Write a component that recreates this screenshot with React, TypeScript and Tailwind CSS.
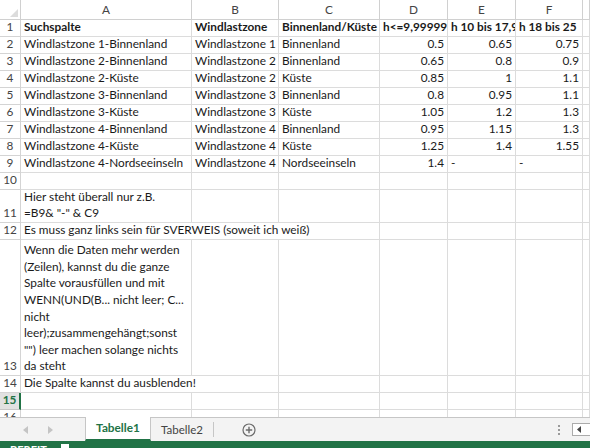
type Cell = { t?: string; w: string; right?: boolean; bold?: boolean; lines?: string[] }
type Row = { n: string; h: string; cells: Cell[]; active?: boolean }

const FONT = { fontFamily: 'Lato, "Open Sans", sans-serif' }

// column widths (incl. right gridline)
const HW = 'w-[21px]'
const A = 'w-[171px]', B = 'w-[87px]', C = 'w-[101px]', D = 'w-[68px]', E = 'w-[68px]', F = 'w-[67px]', G = 'w-[7px]'

const plain = (a = '', b = '', c = '', d = '', e = '', f = '', dr = true, er = true, fr = true): Cell[] => [
  { t: a, w: A }, { t: b, w: B }, { t: c, w: C },
  { t: d, w: D, right: dr }, { t: e, w: E, right: er }, { t: f, w: F, right: fr }, { w: G },
]

const rows: Row[] = [
  {
    n: '1', h: 'h-[17px]', cells: [
      { t: 'Suchspalte', w: A, bold: true }, { t: 'Windlastzone', w: B, bold: true }, { t: 'Binnenland/Küste', w: C, bold: true },
      { t: 'h<=9,999999999', w: D, bold: true }, { t: 'h 10 bis 17,999', w: E, bold: true }, { t: 'h 18 bis 25', w: F, bold: true }, { w: G },
    ],
  },
  { n: '2', h: 'h-[17px]', cells: plain('Windlastzone 1-Binnenland', 'Windlastzone 1', 'Binnenland', '0.5', '0.65', '0.75') },
  { n: '3', h: 'h-[17px]', cells: plain('Windlastzone 2-Binnenland', 'Windlastzone 2', 'Binnenland', '0.65', '0.8', '0.9') },
  { n: '4', h: 'h-[17px]', cells: plain('Windlastzone 2-Küste', 'Windlastzone 2', 'Küste', '0.85', '1', '1.1') },
  { n: '5', h: 'h-[17px]', cells: plain('Windlastzone 3-Binnenland', 'Windlastzone 3', 'Binnenland', '0.8', '0.95', '1.1') },
  { n: '6', h: 'h-[17px]', cells: plain('Windlastzone 3-Küste', 'Windlastzone 3', 'Küste', '1.05', '1.2', '1.3') },
  { n: '7', h: 'h-[17px]', cells: plain('Windlastzone 4-Binnenland', 'Windlastzone 4', 'Binnenland', '0.95', '1.15', '1.3') },
  { n: '8', h: 'h-[17px]', cells: plain('Windlastzone 4-Küste', 'Windlastzone 4', 'Küste', '1.25', '1.4', '1.55') },
  { n: '9', h: 'h-[17px]', cells: plain('Windlastzone 4-Nordseeinseln', 'Windlastzone 4', 'Nordseeinseln', '1.4', '-', '-', true, false, false) },
  { n: '10', h: 'h-[17px]', cells: plain() },
  {
    n: '11', h: 'h-[33px]', cells: [
      { w: A, lines: ['Hier steht überall nur z.B.', '=B9& "-" & C9'] }, { w: B }, { w: C }, { w: D }, { w: E }, { w: F }, { w: G },
    ],
  },
  {
    n: '12', h: 'h-[17px]', cells: [
      { t: 'Es muss ganz links sein für SVERWEIS (soweit ich weiß)', w: 'w-[359px]' }, { w: D }, { w: E }, { w: F }, { w: G },
    ],
  },
  {
    n: '13', h: 'h-[136px]', cells: [
      {
        w: A, lines: [
          'Wenn die Daten mehr werden', '(Zeilen), kannst du die ganze', 'Spalte vorausfüllen und mit',
          'WENN(UND(B... nicht leer; C...', 'nicht', 'leer);zusammengehängt;sonst', '"") leer machen solange nichts', 'da steht',
        ],
      },
      { w: B }, { w: C }, { w: D }, { w: E }, { w: F }, { w: G },
    ],
  },
  {
    n: '14', h: 'h-[17px]', cells: [
      { t: 'Die Spalte kannst du ausblenden!', w: 'w-[258px]' }, { w: C }, { w: D }, { w: E }, { w: F }, { w: G },
    ],
  },
  { n: '15', h: 'h-[17px]', cells: plain(), active: true },
  { n: '16', h: 'h-[17px]', cells: plain() },
]

function GridCell({ c }: { c: Cell }) {
  return (
    <div className={`${c.w} shrink-0 h-full border-r border-b border-[#dcdcdc] px-[3px] flex flex-col justify-end overflow-hidden whitespace-nowrap text-[#1a1a1a] ${c.lines ? '' : 'pb-[1px]'} ${c.right ? 'items-end' : 'items-start'} ${c.bold ? 'font-bold' : ''}`}>
      {c.lines ? c.lines.map((l, i) => <div key={i} className="leading-[16.6px]">{l}</div>) : <div className="leading-[16px]">{c.t}</div>}
    </div>
  )
}

function SheetRow({ r }: { r: Row }) {
  return (
    <div className={`flex ${r.h}`}>
      <div className={`${HW} shrink-0 h-full flex items-end justify-center pb-[1px] leading-[16px] border-b ${r.active
        ? 'bg-[#e1e1e1] text-[#217346] font-bold border-r-2 border-r-[#217346] border-b-[#c6c6c6]'
        : 'bg-white text-[#444] border-r border-[#d4d4d4]'}`}>
        {r.n}
      </div>
      {r.cells.map((c, i) => <GridCell key={i} c={c} />)}
    </div>
  )
}

export default function App() {
  const heads: [string, string][] = [['A', A], ['B', B], ['C', C], ['D', D], ['E', E], ['F', F], ['', G]]
  return (
    <div className="w-[590px] h-[448px] overflow-hidden bg-white flex flex-col text-[11.8px]" style={FONT}>
      <div className="flex-1 overflow-hidden">
        {/* column headers */}
        <div className="flex h-[20px]">
          <div className={`${HW} shrink-0 h-full border-r border-b border-[#d0d0d0] relative`}>
            <svg width="8" height="8" className="absolute right-[2px] bottom-[2px]"><polygon points="8,0 8,8 0,8" fill="#dcdcdc" /></svg>
          </div>
          {heads.map(([l, w], i) => (
            <div key={i} className={`${w} shrink-0 h-full border-r border-b border-[#d0d0d0] flex items-center justify-center text-[#444] pt-[1px]`}>{l}</div>
          ))}
        </div>
        {rows.map(r => <SheetRow key={r.n} r={r} />)}
      </div>

      {/* sheet tabs */}
      <div className="h-[24px] shrink-0 bg-[#f3f3f3] border-t border-[#c6c6c6] flex items-stretch">
        <div className="w-[85px] flex items-center gap-[20px] pl-[23px]">
          <svg width="5" height="8"><polygon points="5,0 5,8 0,4" fill="#c4c4c4" /></svg>
          <svg width="5" height="8"><polygon points="0,0 0,8 5,4" fill="#c4c4c4" /></svg>
        </div>
        <div className="w-[66px] -mt-px bg-white border-x border-[#c6c6c6] border-b-2 border-b-[#217346] flex items-center justify-center font-bold text-[#217346] text-[11.8px]">Tabelle1</div>
        <div className="w-[62px] flex items-center justify-center text-[#444] text-[11.5px]">Tabelle2</div>
        <div className="w-px my-[4px] bg-[#c6c6c6]" />
        <div className="w-[69px] flex items-center justify-center">
          <svg width="14" height="14" viewBox="0 0 14 14">
            <circle cx="7" cy="7" r="6" fill="none" stroke="#6b6b6b" strokeWidth="1.2" />
            <path d="M7 3.8v6.4M3.8 7h6.4" stroke="#6b6b6b" strokeWidth="1.4" />
          </svg>
        </div>
        <div className="flex-1" />
        <div className="flex flex-col justify-center gap-[2px] mr-[12px]">
          <span className="w-[2px] h-[2px] bg-[#9a9a9a]" />
          <span className="w-[2px] h-[2px] bg-[#9a9a9a]" />
          <span className="w-[2px] h-[2px] bg-[#9a9a9a]" />
        </div>
        <div className="w-[18px] my-[5px] bg-white border border-[#ababab] border-r-0 flex items-center pl-[4px]">
          <svg width="4" height="7"><polygon points="4,0 4,7 0,3.5" fill="#444" /></svg>
        </div>
      </div>

      {/* status bar */}
      <div className="h-[7px] shrink-0 bg-[#217346] overflow-hidden flex items-start gap-[14px] pl-[10px] pt-[3px] text-white text-[11px] leading-[11px] font-bold">
        <span>BEREIT</span>
        <span className="w-[8px] h-[6px] bg-white" />
      </div>
    </div>
  )
}
